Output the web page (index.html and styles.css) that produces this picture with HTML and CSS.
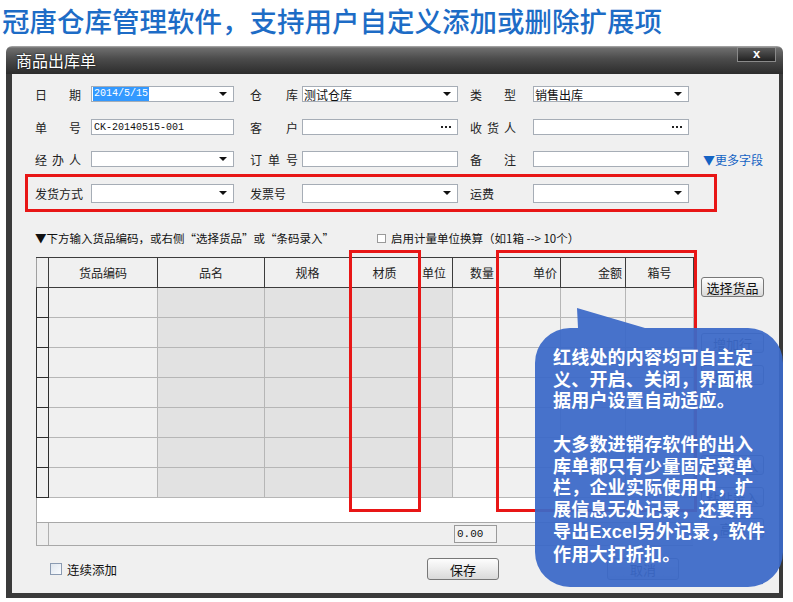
FILE: index.html
```html
<!DOCTYPE html>
<html lang="zh-CN">
<head>
<meta charset="utf-8">
<title>商品出库单</title>
<link rel="stylesheet" href="styles.css">
</head>
<body>
<h1 class="headline">冠唐仓库管理软件，支持用户自定义添加或删除扩展项</h1>
<div class="window">
  <div class="titlebar">
    <span class="title">商品出库单</span>
    <span class="close">x</span>
  </div>
  <div class="frame">
    <div class="form">
      <div class="row r1">
        <span class="lbl c1"><span class="just w46"><i>日</i><i>期</i></span></span>
        <span class="inp w1 drop"><span class="sel">2014/5/15</span></span>
        <span class="lbl c2"><span class="just w48"><i>仓</i><i>库</i></span></span>
        <span class="inp w2 drop">测试仓库</span>
        <span class="lbl c3"><span class="just w46"><i>类</i><i>型</i></span></span>
        <span class="inp w2 drop">销售出库</span>
      </div>
      <div class="row r2">
        <span class="lbl c1"><span class="just w46"><i>单</i><i>号</i></span></span>
        <span class="inp w1 mono">CK-20140515-001</span>
        <span class="lbl c2"><span class="just w48"><i>客</i><i>户</i></span></span>
        <span class="inp w2 dots"><span class="ell"><i></i><i></i><i></i></span></span>
        <span class="lbl c3"><span class="just w46"><i>收</i><i>货</i><i>人</i></span></span>
        <span class="inp w2 dots"><span class="ell"><i></i><i></i><i></i></span></span>
      </div>
      <div class="row r3">
        <span class="lbl c1"><span class="just w46"><i>经</i><i>办</i><i>人</i></span></span>
        <span class="inp w1 drop"></span>
        <span class="lbl c2"><span class="just w48"><i>订</i><i>单</i><i>号</i></span></span>
        <span class="inp w2"></span>
        <span class="lbl c3"><span class="just w46"><i>备</i><i>注</i></span></span>
        <span class="inp w2"></span>
        <span class="more">▼更多字段</span>
      </div>
      <div class="redrow">
        <span class="lbl c1">发货方式</span>
        <span class="inp w1 tall drop"></span>
        <span class="lbl c2">发票号</span>
        <span class="inp w2 tall drop"></span>
        <span class="lbl c3">运费</span>
        <span class="inp w2 tall drop"></span>
      </div>
    </div>

    <div class="hint">
      <span class="hint-text">▼下方输入货品编码，或右侧“选择货品”或“条码录入”</span>
      <span class="hint-check"><span class="box"></span>启用计量单位换算（如1箱 --&gt; 10个）</span>
    </div>

    <div class="mid">
      <div class="grid">
        <table>
          <colgroup>
            <col class="k0"><col class="k1"><col class="k2 g"><col class="k3 g"><col class="k4 g"><col class="k5 g"><col class="k6"><col class="k7"><col class="k8"><col class="k9">
          </colgroup>
          <thead>
            <tr>
              <th class="rh"></th>
              <th>货品编码</th>
              <th>品名</th>
              <th>规格</th>
              <th>材质</th>
              <th class="al">单位</th>
              <th class="ar">数量</th>
              <th class="ar">单价</th>
              <th class="ar">金额</th>
              <th>箱号</th>
            </tr>
          </thead>
          <tbody>
            <tr><td class="rh"></td><td></td><td></td><td></td><td></td><td></td><td></td><td></td><td></td><td></td></tr>
            <tr><td class="rh"></td><td></td><td></td><td></td><td></td><td></td><td></td><td></td><td></td><td></td></tr>
            <tr><td class="rh"></td><td></td><td></td><td></td><td></td><td></td><td></td><td></td><td></td><td></td></tr>
            <tr><td class="rh"></td><td></td><td></td><td></td><td></td><td></td><td></td><td></td><td></td><td></td></tr>
            <tr><td class="rh"></td><td></td><td></td><td></td><td></td><td></td><td></td><td></td><td></td><td></td></tr>
            <tr><td class="rh"></td><td></td><td></td><td></td><td></td><td></td><td></td><td></td><td></td><td></td></tr>
            <tr><td class="rh"></td><td></td><td></td><td></td><td></td><td></td><td></td><td></td><td></td><td></td></tr>
          </tbody>
        </table>
        <div class="blank"></div>
        <div class="foot">
          <span class="foot-rh"></span>
          <span class="total">0.00</span>
        </div>
      </div>
      <div class="side">
        <span class="btn b1">选择货品</span>
        <span class="btn b2">增加行</span>
        <span class="btn b3">删除行</span>
        <span class="btn b4">条码录入</span>
        <span class="btn b5">粘贴录入</span>
        <span class="btn b6">高级</span>
      </div>
    </div>

    <div class="bottom">
      <span class="chk-wrap"><span class="chk"></span>连续添加</span>
      <span class="btn wide">保存</span>
      <span class="btn wide cancel">取消</span>
    </div>

    <div class="mark m1"></div>
    <div class="mark m2"></div>
  </div>
</div>

<svg class="bubble" width="793" height="602" viewBox="0 0 793 602">
  <path d="M570 328 L578 328 L577 308 L645 328 L748 328 A35 35 0 0 1 783 363 L783 552 A35 35 0 0 1 748 587 L570 587 A35 35 0 0 1 535 552 L535 363 A35 35 0 0 1 570 328 Z" fill="#3b69c8" fill-opacity="0.94"/>
</svg>
<div class="bubble-text">红线处的内容均可自主定<br>义、开启、关闭，界面根<br>据用户设置自动适应。<br><br>大多数进销存软件的出入<br>库单都只有少量固定菜单<br>栏，企业实际使用中，扩<br>展信息无处记录，还要再<br>导出<b>Excel</b>另外记录，软件<br>作用大打折扣。</div>
</body>
</html>
```

FILE: styles.css
```css
* { box-sizing: border-box; }

body {
  margin: 0;
  width: 793px;
  height: 602px;
  overflow: hidden;
  position: relative;
  background: #fff;
  font-family: "Noto Sans CJK SC", "Noto Sans", sans-serif;
  font-size: 12px;
  color: #111;
}

.headline {
  margin: 0;
  height: 46px;
  padding-left: 2px;
  font-size: 27.5px;
  line-height: 40px;
  font-weight: 500;
  color: #1d6cc6;
  white-space: nowrap;
}

.window {
  margin-left: 6px;
  width: 777px;
}

.titlebar {
  height: 28px;
  border-radius: 6px 6px 0 0;
  background: linear-gradient(#b0b0b0 0, #6e6e6e 2px, #4c4c4c 45%, #2c2c2c 100%);
  display: flex;
  align-items: center;
  justify-content: space-between;
  padding: 0 7px 0 10px;
}

.title {
  color: #fff;
  font-size: 16px;
  line-height: 20px;
  text-shadow: 0 0 2px #000;
}

.close {
  align-self: flex-start;
  margin-top: 1px;
  width: 39px;
  height: 15px;
  border: 1px solid #8a8a8a;
  background: linear-gradient(#5a5a5a, #222);
  color: #fff;
  font-family: "Liberation Sans", sans-serif;
  font-weight: bold;
  font-size: 13px;
  line-height: 12px;
  text-align: center;
}

.frame {
  position: relative;
  height: 524px;
  background: #f0f0f0;
  border-left: 6px solid #3a3a3a;
  border-right: 4px solid #3a3a3a;
  border-bottom: 5px solid #3a3a3a;
}

/* form */
.form { padding: 12px 0 0 23px; }

.row {
  display: flex;
  align-items: center;
  height: 16px;
}
.r2 { margin-top: 17px; }
.r3 { margin-top: 16px; }

.redrow {
  margin: 7px 0 0 -10px;
  width: 692px;
  height: 38px;
  border: 3px solid #e81616;
  padding-left: 7px;
  display: flex;
  align-items: center;
}

.lbl { display: flex; align-items: center; color: #222; }
.c1 { width: 56px; }
.c2 { width: 52px; }
.c3 { width: 63px; }

.just { display: flex; justify-content: space-between; }
.just i { font-style: normal; }
.w46 { width: 46px; }
.w48 { width: 48px; }

.inp {
  position: relative;
  display: flex;
  align-items: center;
  height: 16px;
  padding-left: 1px;
  background: #fff;
  border: 1px solid #a6adb6;
  font-size: 12px;
  color: #111;
  white-space: nowrap;
}
.inp.tall { height: 19px; }
.w1 { width: 143px; margin-right: 16px; }
.w2 { width: 156px; margin-right: 12px; }

.drop::after {
  content: "";
  position: absolute;
  right: 6px;
  top: 50%;
  margin-top: -2px;
  border-left: 4px solid transparent;
  border-right: 4px solid transparent;
  border-top: 4px solid #111;
}

.dots { justify-content: flex-end; padding-right: 6px; }
.ell { display: flex; gap: 2px; }
.ell i {
  width: 2px;
  height: 2px;
  background: #222;
}

.sel {
  background: #3399ff;
  color: #fff;
  font-family: "Liberation Mono", monospace;
  font-size: 10px;
  line-height: 14px;
  padding: 0 1px;
}

.mono {
  font-family: "Liberation Mono", monospace;
  font-size: 10px;
  padding-left: 2px;
}

.more {
  margin-left: 2px;
  color: #1463c4;
  font-size: 12px;
}

/* hint */
.hint {
  margin-top: 18px;
  height: 16px;
  padding-left: 23px;
  display: flex;
  align-items: center;
}
.hint-text { width: 342px; font-size: 11.5px; white-space: nowrap; }
.hint-check { display: flex; align-items: center; font-size: 11.5px; white-space: nowrap; }
.box {
  width: 9px;
  height: 9px;
  border: 1px solid #9a9a9a;
  background: #fff;
  margin-right: 5px;
}

/* grid */
.mid {
  display: flex;
  margin-top: 11px;
  padding-left: 24px;
}

.grid { width: 657px; }

table {
  border-collapse: collapse;
  table-layout: fixed;
  width: 657px;
}
.k0 { width: 12px; }
.k1 { width: 109px; }
.k2 { width: 107px; }
.k3 { width: 86px; }
.k4 { width: 68px; }
.k5 { width: 34px; }
.k6 { width: 45px; }
.k7 { width: 63px; }
.k8 { width: 65px; }
.k9 { width: 68px; }
col.g { background: #e2e2e2; }

th {
  height: 30px;
  padding: 0 3px;
  background: #f0f0f0;
  border: 1px solid #3c3c3c;
  font-weight: normal;
  font-size: 12px;
  text-align: center;
  color: #222;
}
th.al { text-align: left; }
th.ar { text-align: right; }

td {
  height: 30px;
  padding: 0;
  border: 1px solid #b6b6b6;
}
td.rh {
  background: #f0f0f0;
  border: 1px solid #2e2e2e;
}
th.rh { border-left-color: #a0a0a0; }

.blank {
  height: 24px;
  background: #fff;
  border-left: 1px solid #a8a8a8;
}

.foot {
  height: 24px;
  display: flex;
  align-items: center;
  background: #efefef;
  border: 1px solid #a8a8a8;
  border-right: none;
}
.foot-rh {
  width: 12px;
  height: 100%;
  border-right: 1px solid #b0b0b0;
}
.total {
  margin-left: 405px;
  width: 43px;
  height: 18px;
  border: 1px solid #9a9a9a;
  background: #f2f2f2;
  font-family: "Liberation Mono", monospace;
  font-size: 11px;
  line-height: 16px;
  padding-left: 2px;
}

.side {
  margin-left: 8px;
  width: 63px;
  display: flex;
  flex-direction: column;
}

.btn {
  display: flex;
  align-items: center;
  justify-content: center;
  height: 20px;
  border: 1px solid #777;
  border-radius: 3px;
  background: linear-gradient(#fdfdfd, #ececec 50%, #d9d9d9);
  font-size: 13px;
  color: #111;
}
.side .btn { width: 63px; }
.b1 { margin-top: 20px; }
.b2 { margin-top: 36px; }
.b3 { margin-top: 12px; }
.b4 { margin-top: 70px; }
.b5 { margin-top: 12px; }
.b6 { margin-top: 11px; }

/* bottom */
.bottom {
  margin-top: 12px;
  height: 22px;
  padding-left: 38px;
  display: flex;
  align-items: center;
}
.chk-wrap {
  width: 377px;
  display: flex;
  align-items: center;
  font-size: 12.5px;
}
.chk {
  width: 12px;
  height: 12px;
  margin-right: 5px;
  border: 1px solid #8b9bb2;
  background: linear-gradient(135deg, #dfe6ee, #fafcff);
}
.btn.wide { width: 72px; height: 22px; }
.cancel { margin-left: 108px; }

/* red annotation boxes */
.mark {
  position: absolute;
  top: 176px;
  height: 262px;
  border: 3px solid #e81616;
}
.m1 { left: 337px; width: 72px; }
.m2 { left: 484px; width: 201px; }

/* callout bubble */
.bubble {
  position: absolute;
  left: 0;
  top: 0;
  pointer-events: none;
}
.bubble-text {
  position: absolute;
  left: 553px;
  top: 346px;
  width: 226px;
  color: #fff;
  font-size: 18px;
  line-height: 21.7px;
  font-weight: bold;
  letter-spacing: 0.2px;
  white-space: nowrap;
}
.bubble-text b { font-family: "Liberation Sans", sans-serif; }
```
